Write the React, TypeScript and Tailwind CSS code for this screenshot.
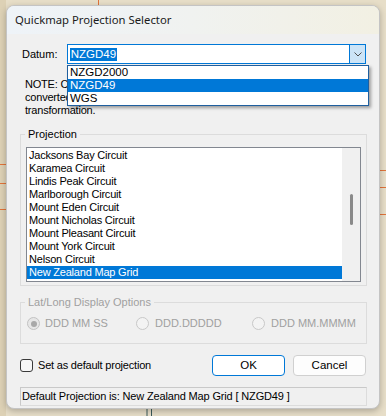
export default function App() {
  const items = [
    "Jacksons Bay Circuit",
    "Karamea Circuit",
    "Lindis Peak Circuit",
    "Marlborough Circuit",
    "Mount Eden Circuit",
    "Mount Nicholas Circuit",
    "Mount Pleasant Circuit",
    "Mount York Circuit",
    "Nelson Circuit",
    "New Zealand Map Grid",
  ];
  const ff = { fontFamily: '"Liberation Sans", Arial, sans-serif' };
  return (
    <div
      className="relative w-[386px] h-[416px] overflow-hidden bg-[#e7dec8] pt-[5px] pl-[6px]"
      style={ff}
    >
      <svg className="absolute left-0 top-0" width="386" height="416">
        <rect x="0" y="0" width="6" height="416" fill="#ddd1b5" />
        <line x1="98.5" y1="0" x2="98.5" y2="6" stroke="#e0733a" strokeWidth="1" />
        <line x1="0" y1="164.5" x2="7" y2="164.5" stroke="#e0733a" strokeWidth="1" />
        <line x1="0" y1="183.5" x2="7" y2="183.5" stroke="#e0733a" strokeWidth="1" />
        <line x1="0" y1="209.5" x2="7" y2="209.5" stroke="#e0733a" strokeWidth="1" />
        <line x1="379" y1="170.5" x2="386" y2="170.5" stroke="#e0733a" strokeWidth="1" />
        <line x1="379" y1="187.5" x2="386" y2="187.5" stroke="#e0733a" strokeWidth="1" />
        <line x1="379" y1="214.5" x2="386" y2="214.5" stroke="#e0733a" strokeWidth="1" />
        <line x1="147" y1="408" x2="147" y2="416" stroke="#3b5a5a" strokeWidth="1" />
        <line x1="151.5" y1="408" x2="151.5" y2="416" stroke="#3b5a5a" strokeWidth="1" />
      </svg>

      <div className="relative w-[374px] h-[404px] rounded-[8px] border border-[#c4c4c4] bg-[#f0f0f0] overflow-hidden shadow-[0_2px_6px_rgba(0,0,0,0.25)]">
        {/* Title bar */}
        <div className="h-[28px] flex items-center pl-[8px] bg-gradient-to-r from-[#eef3f8] via-[#f0f2f0] to-[#f2f0e3]">
          <span
            className="text-[11.3px] text-[#1b1b1b] leading-none"
            style={{ fontFamily: '"Noto Sans", "Open Sans", sans-serif' }}
          >
            Quickmap Projection Selector
          </span>
        </div>

        {/* Body */}
        <div className="px-[13px] text-[11px] text-black">
          {/* Datum row */}
          <div className="relative mt-[10px] flex items-center h-[20px]">
            <div className="w-[47px] pl-[2px] leading-[13px]">Datum:</div>
            <div className="w-[301px] h-[20px] border border-[#0078d7] bg-white flex items-center">
              <div className="flex-1 pl-[2px] flex items-center">
                <span className="bg-[#0078d7] text-white px-[1px] text-[11.5px] leading-[13px]">
                  NZGD49
                </span>
              </div>
              <div className="w-[16px] h-[18px] bg-[#cce4f7] border-l border-[#0078d7] flex items-center justify-center">
                <svg width="8" height="5" viewBox="0 0 8 5">
                  <path d="M0.5 0.5 L4 4 L7.5 0.5" fill="none" stroke="#505050" strokeWidth="1" />
                </svg>
              </div>
            </div>
            {/* dropdown */}
            <div className="absolute left-[47px] top-[21px] w-[302px] border border-[#1f5f9f] bg-white z-10 shadow-[2px_2px_3px_rgba(0,0,0,0.35)] text-[11.5px]">
              <div className="h-[13px] leading-[13px] pl-[2px]">NZGD2000</div>
              <div className="h-[13px] leading-[13px] pl-[2px] bg-[#0078d7] text-white">NZGD49</div>
              <div className="h-[13px] leading-[13px] pl-[2px]">WGS</div>
            </div>
          </div>

          {/* Note */}
          <div className="mt-[14px] pl-[5px] leading-[13px] tracking-[-0.2px]">
            NOTE: Co-ordinates entered will be automatically
            <br />
            converted to the selected datum using a 7 parameter
            <br />
            transformation.
          </div>

          {/* Projection group */}
          <fieldset className="mt-[11px] w-[347px] border border-[#dcdcdc] px-[5px] pb-[3px]">
            <legend className="-ml-[1px] px-[3px] leading-[13px]">Projection</legend>
            <div className="mt-[6px] h-[135px] border border-[#828790] bg-white flex">
              <div className="flex-1 pt-[1px] tracking-[-0.2px]">
                {items.map((it, i) => (
                  <div
                    key={it}
                    className={
                      i === items.length - 1
                        ? "h-[13px] leading-[13px] pl-[2px] bg-[#0078d7] text-white"
                        : "h-[13px] leading-[13px] pl-[2px]"
                    }
                  >
                    {it}
                  </div>
                ))}
              </div>
              <div className="w-[18px] bg-[#f0f0f0] flex justify-center pt-[46px]">
                <div className="w-[3px] h-[31px] rounded-full bg-[#8a8a8a]" />
              </div>
            </div>
          </fieldset>

          {/* Lat/Long group */}
          <fieldset className="mt-[10px] w-[347px] border border-[#dcdcdc] px-[5px] pb-[13px] text-[#a0a0a0]">
            <legend className="-ml-[1px] px-[3px] leading-[13px]">Lat/Long Display Options</legend>
            <div className="mt-[8px] flex items-center h-[13px]">
              <div className="w-[110px] pl-[1px] flex items-center gap-[5px]">
                <div className="w-[13px] h-[13px] rounded-full border border-[#c2c2c2] bg-[#e6e6e6] flex items-center justify-center">
                  <div className="w-[6px] h-[6px] rounded-full bg-[#a8a8a8]" />
                </div>
                <span className="leading-[13px]">DDD MM SS</span>
              </div>
              <div className="w-[116px] flex items-center gap-[6px]">
                <div className="w-[13px] h-[13px] rounded-full border border-[#c8c8c8] bg-[#f3f3f3]" />
                <span className="leading-[13px]">DDD.DDDDD</span>
              </div>
              <div className="flex items-center gap-[6px]">
                <div className="w-[13px] h-[13px] rounded-full border border-[#c8c8c8] bg-[#f3f3f3]" />
                <span className="leading-[13px]">DDD MM.MMMM</span>
              </div>
            </div>
          </fieldset>

          {/* Checkbox + buttons */}
          <div className="mt-[11px] flex items-center justify-between h-[21px]">
            <div className="flex items-center gap-[5px]">
              <div className="w-[13px] h-[13px] rounded-[3px] border border-[#3a3a3a] bg-[#f7f7f7]" />
              <span className="leading-[13px] tracking-[-0.2px]">Set as default projection</span>
            </div>
            <div className="flex gap-[8px]">
              <div className="w-[73px] h-[21px] rounded-[4px] border border-[#0078d7] bg-white flex items-center justify-center text-[11.5px]">
                OK
              </div>
              <div className="w-[73px] h-[21px] rounded-[4px] border border-[#d0d0d0] bg-[#fdfdfd] flex items-center justify-center text-[11.5px]">
                Cancel
              </div>
            </div>
          </div>

          {/* Status */}
          <div className="mt-[11px] w-[347px] h-[19px] border border-[#dcdcdc] border-t-[#c9c9c9] border-l-[#c9c9c9] flex items-center pl-[1px]">
            <span className="leading-[13px] tracking-[-0.15px]">Default Projection is: New Zealand Map Grid [ NZGD49 ]</span>
          </div>
        </div>
      </div>
    </div>
  );
}
